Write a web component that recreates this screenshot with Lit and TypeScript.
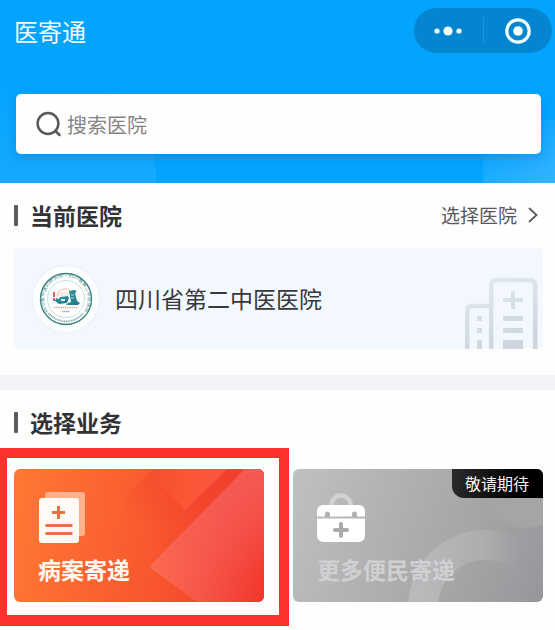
import { LitElement, html, css, svg } from "lit";
import { customElement } from "lit/decorators.js";

const sealArt = svg`
  <defs>
    <path id="seal-top" d="M15 45.500A22 22 0 1 1 51 45.500" />
    <linearGradient id="roof" x1="0" y1="0" x2="1" y2="1">
      <stop offset="0" stop-color="#2d9c97" /><stop offset="1" stop-color="#27728c" />
    </linearGradient>
  </defs>
  <circle cx="33" cy="33" r="33" fill="#fdfefe" />
  <circle cx="33" cy="33" r="25.5" fill="none" stroke="#37827f" stroke-width="1.3" />
  <circle cx="33" cy="33" r="18.500" fill="none" stroke="#9cc0be" stroke-width=".5" />
  <text class="ring-text"><textPath href="#seal-top" startOffset="50%" text-anchor="middle">四川省中医药研究院•四川省第二中医医院</textPath></text>
  <path d="M15.500 47A22.500 22.500 0 0 0 50.500 47" fill="none" stroke="#86a9aa" stroke-width="1.8" stroke-dasharray="1.1 .7" />
  <path d="M24 31a8 8 0 0 1 15-4" fill="none" stroke="#eab7a3" stroke-width="1" />
  <path d="M26 27h9M24.500 29h12" stroke="#f1cbbd" stroke-width=".8" />
  <path d="M21 26v5M21 32v3" stroke="#ca6270" stroke-width="2" />
  <path d="M23 32l3 1 1-2 8-1 1 2-2 5-8 1-4-3z" fill="url(#roof)" />
  <path d="M28 33h4v2h-4z" fill="#d9eeee" />
  <path d="M36 25l5-1 3 1-2 2 2 8 3 2-2 2H33l2-2 3-1z" fill="url(#roof)" />
  <path d="M38 29h3M38 32h3" stroke="#d9eeee" stroke-width=".8" />
  <path d="M21 41.500h24" stroke="#d8a79c" stroke-width="1.4" stroke-dasharray="1.400 .8" />
  <path d="M29 45.500h8" stroke="#b3a39e" stroke-width="1.6" stroke-dasharray="1.500 .5" />
`;

@customElement("app-root")
class AppRoot extends LitElement {
  static styles = css`
    :host {
      display: block;
      min-height: 100vh;
      background: #fefefe;
      color: #333236;
      font-family: "Noto Sans CJK SC", "Noto Sans", sans-serif;
    }
    * { box-sizing: border-box; }
    svg { display: block; flex: none; }
    button { font: inherit; border: 0; padding: 0; background: none; color: inherit; cursor: pointer; }
    h1, h2 { margin: 0; }

    .top {
      position: relative;
      overflow: hidden;
      background: #02a4ff;
      padding: 8px 14px 29px 16px;
    }
    .glow-left, .glow-right { position: absolute; pointer-events: none; }
    .glow-left {
      left: -52px; bottom: -97px; width: 208px; height: 208px; border-radius: 50%;
      background: linear-gradient(to bottom, #1cabff00 2%, #16a9ff 50%);
    }
    .glow-right {
      right: 0; bottom: 0; width: 72px; height: 63px;
      background: linear-gradient(150deg, #02a4ff 10%, #30b2ff 90%);
    }
    .bar {
      position: relative;
      display: flex; align-items: center; justify-content: space-between;
      margin-right: -11px; margin-left: -2px;
    }
    .bar h1 { font-size: 24px; line-height: 36px; font-weight: 400; color: #f2fcff; }
    .capsule {
      display: flex; align-items: center;
      width: 138px; height: 45px; border-radius: 23px;
      background: #0385cf;
    }
    .capsule button { flex: 1; height: 45px; display: grid; place-items: center; }
    .rule { width: 1px; height: 27px; background: #1e95dc; }
    .search {
      position: relative;
      display: flex; align-items: center; gap: 6px;
      height: 60px; margin-top: 41px; padding: 0 20px;
      background: #fefefe; border-radius: 5px;
      box-shadow: 0 3px 12px #0070c466;
    }
    .search input {
      flex: 1; min-width: 0; border: 0; outline: 0; background: none; padding: 2px 0 0;
      font: inherit; font-size: 20px; line-height: 30px; color: #333236;
    }
    .search input::placeholder { color: #858386; opacity: 1; }

    .section { padding: 14px 12px 26px 14px; }
    .head {
      display: flex; align-items: center; justify-content: space-between;
      height: 36px;
    }
    .head h2 {
      display: flex; align-items: center; gap: 12px;
      font-size: 23px; line-height: 34px; font-weight: 700;
    }
    .head h2::before {
      content: ""; width: 4px; height: 21px; border-radius: 1px; background: #5b5b5e;
    }
    .choose {
      display: flex; align-items: center; gap: 11px; margin-right: 5px;
      font-size: 19px; line-height: 28px; color: #58575b; text-decoration: none;
    }
    .hospital {
      display: flex; align-items: center;
      height: 101px; margin-top: 15px; padding: 0 4px 0 19px;
      border-radius: 5px; background: #f3f8ff;
    }
    .seal { border-radius: 50%; box-shadow: 0 0 3px #dfe9ef; }
    .ring-text { font-size: 5px; fill: #4f8b89; }
    .name { flex: 1; margin-left: 16px; padding-bottom: 2px; font-size: 23px; line-height: 34px; color: #38383c; }
    .building { align-self: flex-end; }
    .band { height: 15px; background: #f3f2f6; }

    .cards { display: grid; grid-template-columns: 1fr 1fr; gap: 29px; margin-top: 29px; }
    .cell { position: relative; }
    .card {
      position: relative; overflow: hidden; width: 100%;
      display: flex; flex-direction: column; align-items: flex-start; gap: 10px;
      padding: 23px 24px 18px; border-radius: 6px;
      font-size: 23px; line-height: 30px; font-weight: 700; text-align: left;
    }
    .card > * { position: relative; }
    .card > .art { position: absolute; inset: 0; width: 100%; height: 100%; }
    .records { background: linear-gradient(100deg, #ff7933, #f8562f 58%, #ef3a2e); color: #fff8f0; }
    .more { background: linear-gradient(110deg, #c1c0c1, #adacad 50%, #98969a); color: #d0cfd2; cursor: default; }
    .card > .badge {
      position: absolute; top: 0; right: 0;
      padding: 0 14px 0 13px; border-bottom-left-radius: 12px;
      background: linear-gradient(100deg, #2c2c2d, #000 70%);
      color: #f6f6f6; font-size: 16px; line-height: 29px; font-weight: 400;
    }
    .marker {
      position: absolute; inset: -21px -25px -24px -14px;
      border: solid #ff312f; border-width: 10px 10px 11px 7px;
      pointer-events: none;
    }
  `;

  render() {
    return html`
      <header class="top">
        <div class="glow-left"></div>
        <div class="glow-right"></div>
        <div class="bar">
          <h1>医寄通</h1>
          <div class="capsule">
            <button aria-label="更多">
              <svg width="28" height="10" viewBox="0 0 28 10" fill="#f4ffff">
                <circle cx="3" cy="5" r="2.6" /><circle cx="14" cy="5" r="4.6" /><circle cx="25" cy="5" r="2.6" />
              </svg>
            </button>
            <span class="rule"></span>
            <button aria-label="关闭">
              <svg width="26" height="26" viewBox="0 0 26 26">
                <circle cx="13" cy="13" r="11.200" fill="none" stroke="#f4ffff" stroke-width="3.2" />
                <circle cx="13" cy="13" r="4.800" fill="#f4ffff" />
              </svg>
            </button>
          </div>
        </div>
        <label class="search">
          <svg width="25" height="26" viewBox="0 0 25 26" fill="none" stroke="#59585b" stroke-width="2.5" stroke-linecap="round">
            <circle cx="12" cy="12.500" r="10.400" /><path d="M19.500 20l4 4" />
          </svg>
          <input type="search" aria-label="搜索医院" placeholder="搜索医院" />
        </label>
      </header>

      <section class="section">
        <div class="head">
          <h2>当前医院</h2>
          <a class="choose" href="#hospitals">选择医院
            <svg width="10" height="16" viewBox="0 0 10 16" fill="none" stroke="#58575b" stroke-width="1.8">
              <path d="M1 1l7.500 7L1 15" />
            </svg>
          </a>
        </div>
        <div class="hospital">
          <svg class="seal" width="66" height="66" viewBox="0 0 66 66">${sealArt}</svg>
          <span class="name">四川省第二中医医院</span>
          <svg class="building" width="74" height="71" viewBox="0 0 74 71">
            <defs>
              <linearGradient id="wall" gradientUnits="userSpaceOnUse" x1="10" y1="0" x2="40" y2="71">
                <stop offset="0" stop-color="#e2eaf1" /><stop offset="1" stop-color="#ccd5de" />
              </linearGradient>
            </defs>
            <g fill="none" stroke="url(#wall)" stroke-width="4.500">
              <path d="M2.200 71V33q0-5 5-5H26" />
              <path d="M26.200 71V8q0-6 6-6h32q6 0 6 6v63" />
            </g>
            <g fill="url(#wall)">
              <path d="M46 13h4v7h8v4h-8v7h-4v-7h-8v-4h8z" />
              <path d="M38 38h20v5H38zM38 50h20v5H38zM38 62h20v9H38z" />
              <path d="M12 38h5v5h-5zM12 50h5v5h-5zM12 62h5v9h-5z" />
            </g>
          </svg>
        </div>
      </section>

      <div class="band"></div>

      <section class="section">
        <div class="head"><h2>选择业务</h2></div>
        <div class="cards">
          <div class="cell">
            <button class="card records">
              <svg class="art" viewBox="0 0 250 133" preserveAspectRatio="none">
                <defs>
                  <linearGradient id="fold" x1="0" y1=".6" x2="1" y2=".9">
                    <stop offset="0" stop-color="#fc7050" /><stop offset=".5" stop-color="#f6564a" /><stop offset="1" stop-color="#f2382e" />
                  </linearGradient>
                  <linearGradient id="sheen" x1=".7" y1="0" x2=".8" y2="1">
                    <stop offset="0" stop-color="#f45a55" /><stop offset=".8" stop-color="#f45a5500" />
                  </linearGradient>
                  <linearGradient id="notch" x1="0" y1="0" x2="1" y2="0">
                    <stop offset="0" stop-color="#fb573200" /><stop offset=".5" stop-color="#fb5735" /><stop offset="1" stop-color="#fb5640" />
                  </linearGradient>
                  <linearGradient id="shade" gradientUnits="userSpaceOnUse" x1="140" y1="70" x2="205" y2="5">
                    <stop offset="0" stop-color="#f2442c00" /><stop offset="1" stop-color="#f2402c" />
                  </linearGradient>
                </defs>
                <path d="M135 98L88 51L139 0H231z" fill="url(#shade)" />
                <path d="M130 0h83l-42 41z" fill="url(#notch)" />
                <path d="M231 0h19v133h-67l-48-35z" fill="url(#fold)" />
                <path d="M231 0h19v133h-67l-48-35z" fill="url(#sheen)" />
              </svg>
              <svg width="48" height="52" viewBox="0 0 48 52">
                <rect x="7" width="40" height="44" rx="3" fill="#ffb18d" />
                <rect x="1" y="6" width="40" height="45" rx="3" fill="#fffaf5" />
                <path d="M14 20.500h13M20.500 14v13" stroke="#e87143" stroke-width="3" />
                <path d="M7.500 33.500h27M7.500 41.500h27" stroke="#e87143" stroke-width="3" />
              </svg>
              <span>病案寄递</span>
            </button>
            <div class="marker"></div>
          </div>
          <div class="cell">
            <button class="card more" aria-disabled="true">
              <svg class="art" viewBox="0 0 250 133" preserveAspectRatio="none" fill="none" stroke-width="30">
                <defs>
                  <linearGradient id="loop" x1="0" y1="0" x2="1" y2="0">
                    <stop offset="0" stop-color="#b9b8ba" /><stop offset=".5" stop-color="#adacae" /><stop offset=".85" stop-color="#a09ea200" />
                  </linearGradient>
                </defs>
                <circle cx="192" cy="138" r="62" stroke="url(#loop)" />
                <circle cx="232" cy="15" r="29" stroke="#a5a4a6" />
              </svg>
              <svg width="48" height="52" viewBox="0 0 48 52">
                <path d="M14.500 13a9.500 9.500 0 0 1 19 0" fill="none" stroke="#d2d1d3" stroke-width="4.500" />
                <path d="M7 13h34q7 0 7 7v4.500H0V20q0-7 7-7z" fill="#fff" />
                <path d="M0 26.500h48V43q0 7-7 7H7q-7 0-7-7z" fill="#fff" />
                <path d="M8 25v-3a2.500 2.500 0 0 1 5 0v3zM35 25v-3a2.500 2.500 0 0 1 5 0v3z" fill="#b2b1b3" />
                <path d="M24 32v12M18 38h12" stroke="#aaa9ab" stroke-width="4" stroke-linecap="round" />
              </svg>
              <span>更多便民寄递</span>
              <span class="badge">敬请期待</span>
            </button>
          </div>
        </div>
      </section>
    `;
  }
}
